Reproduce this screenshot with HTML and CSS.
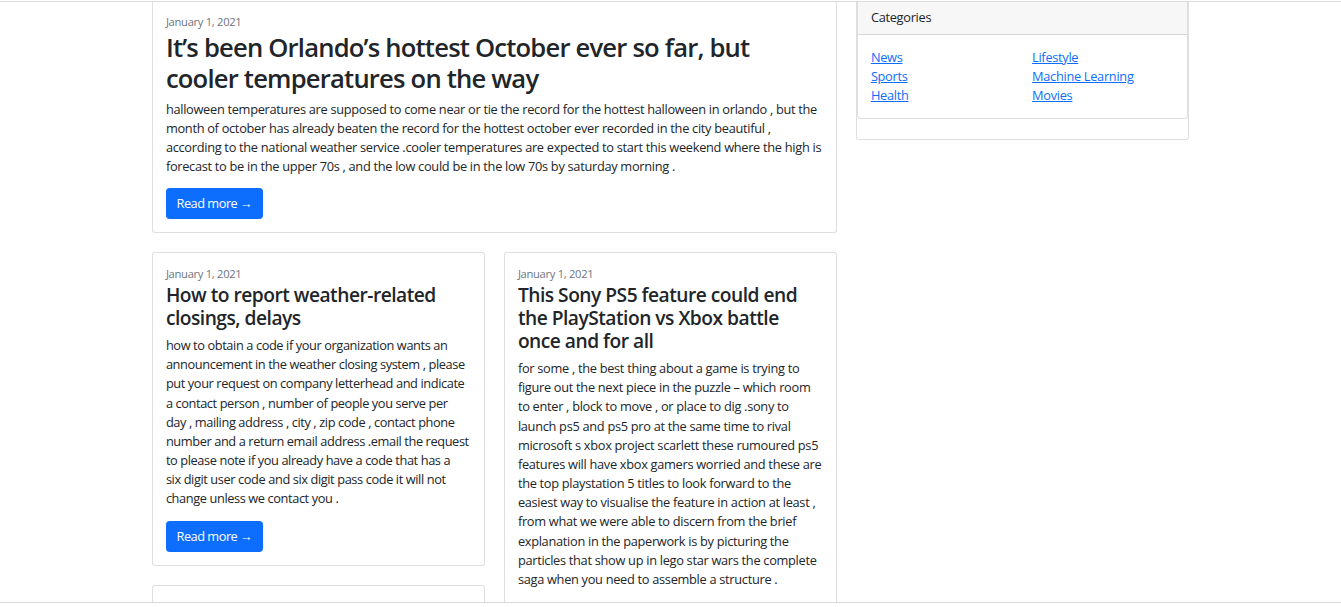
FILE: index.html
```html
<!DOCTYPE html>
<html lang="en">
<head>
<meta charset="utf-8">
<title>Blog</title>
<link rel="stylesheet" href="styles.css">
</head>
<body>
<div class="topbar"></div>
<main class="container">
  <div class="layout">
    <div class="main-col">
      <article class="card card-cut featured">
        <div class="card-body body-cut">
          <div class="date">January 1, 2021</div>
          <h2 class="title-lg">It’s been Orlando’s hottest October ever so far, but cooler temperatures on the way</h2>
          <p class="excerpt">halloween temperatures are supposed to come near or tie the record for the hottest halloween in orlando , but the month of october has already beaten the record for the hottest october ever recorded in the city beautiful , according to the national weather service .cooler temperatures are expected to start this weekend where the high is forecast to be in the upper 70s , and the low could be in the low 70s by saturday morning .</p>
          <a class="btn" href="#">Read more →</a>
        </div>
      </article>
      <div class="grid2">
        <div class="stack">
          <article class="card">
            <div class="card-body">
              <div class="date">January 1, 2021</div>
              <h4 class="title">How to report weather-related closings, delays</h4>
              <p class="excerpt tight">how to obtain a code if your organization wants an<br>
announcement in the weather closing system , please<br>
put your request on company letterhead and indicate<br>
a contact person , number of people you serve per<br>
day , mailing address , city , zip code , contact phone<br>
number and a return email address .email the request<br>
to please note if you already have a code that has a<br>
six digit user code and six digit pass code it will not<br>
change unless we contact you .</p>
              <a class="btn" href="#">Read more →</a>
            </div>
          </article>
          <article class="card">
            <div class="card-body placeholder"></div>
          </article>
        </div>
        <div class="stack">
          <article class="card">
            <div class="card-body">
              <div class="date">January 1, 2021</div>
              <h4 class="title">This Sony PS5 feature could end the PlayStation vs Xbox battle once and for all</h4>
              <p class="excerpt">for some , the best thing about a game is trying to figure out the next piece in the puzzle – which room to enter , block to move , or place to dig .sony to launch ps5 and ps5 pro at the same time to rival microsoft s xbox project scarlett these rumoured ps5 features will have xbox gamers worried and these are the top playstation 5 titles to look forward to the easiest way to visualise the feature in action at least , from what we were able to discern from the brief explanation in the paperwork is by picturing the particles that show up in lego star wars the complete saga when you need to assemble a structure .</p>
              <a class="btn" href="#">Read more →</a>
            </div>
          </article>
        </div>
      </div>
    </div>
    <aside class="side-col">
      <div class="card card-cut outer">
        <div class="card card-cut inner">
          <div class="card-header">Categories</div>
          <div class="card-body">
            <div class="cats">
              <ul>
                <li><a href="#">News</a></li>
                <li><a href="#">Sports</a></li>
                <li><a href="#">Health</a></li>
              </ul>
              <ul>
                <li><a href="#">Lifestyle</a></li>
                <li><a href="#">Machine Learning</a></li>
                <li><a href="#">Movies</a></li>
              </ul>
            </div>
          </div>
        </div>
      </div>
    </aside>
  </div>
</main>
<div class="bottombar"></div>
</body>
</html>
```
FILE: styles.css
```css
* { box-sizing: border-box; }

body {
  margin: 0;
  height: 607px;
  overflow: hidden;
  background: #fff;
  color: #212529;
  font-family: "Open Sans", "Noto Sans", sans-serif;
  font-size: 12.8px;
  line-height: 1.5;
  letter-spacing: -0.3px;
}

.topbar {
  height: 2px;
  border-bottom: 1px solid #dedede;
}

.container {
  width: 1036.8px;
  margin: 0 auto;
}

.layout {
  display: flex;
  gap: 19.2px;
  align-items: flex-start;
}

.main-col { width: 684.8px; flex: none; }
.side-col { width: 332.8px; flex: none; }

.card {
  background: #fff;
  border: 1px solid rgba(0, 0, 0, 0.125);
  border-radius: 3.2px;
}

.card-cut {
  border-top: 0;
  border-top-left-radius: 0;
  border-top-right-radius: 0;
}

.card-body { padding: 12.8px; }
.body-cut { padding-top: 12px; }
.placeholder { height: 60px; }

.featured { margin-bottom: 19.2px; }

.date {
  font-size: 11.2px;
  color: #6c757d;
}

.featured .date { margin-bottom: 2px; }

.title-lg {
  margin: 0 0 5.4px;
  font-size: 25.6px;
  line-height: 1.2;
  font-weight: 600;
  letter-spacing: -0.8px;
}

.title {
  margin: 0 0 7.4px;
  font-size: 19.2px;
  line-height: 1.2;
  font-weight: 600;
  letter-spacing: -0.5px;
}

.excerpt { margin: 0 0 12.8px; }
.featured .excerpt { margin-bottom: 11.8px; }
.tight { letter-spacing: -0.4px; }

.btn {
  display: inline-block;
  background: #0d6efd;
  color: #fff;
  border: 1px solid #0d6efd;
  border-radius: 3.2px;
  padding: 4.8px 9.6px;
  font-size: 12.8px;
  line-height: 1.5;
  letter-spacing: -0.5px;
  text-decoration: none;
}

.grid2 {
  display: grid;
  grid-template-columns: 1fr 1fr;
  gap: 19.2px;
  align-items: start;
}

.stack {
  display: flex;
  flex-direction: column;
  gap: 18.8px;
}

.inner { margin-bottom: 20px; }

.card-header {
  padding: 6.4px 12.8px;
  background: rgba(0, 0, 0, 0.03);
  border-bottom: 1px solid rgba(0, 0, 0, 0.125);
}

.cats {
  display: grid;
  grid-template-columns: 1fr 1fr;
  column-gap: 19.2px;
}

.cats ul {
  list-style: none;
  margin: 0;
  padding: 0;
}

.cats a { color: #0d6efd; text-decoration: underline; }

.bottombar {
  position: fixed;
  left: 0;
  right: 0;
  top: 602px;
  height: 5px;
  background: #fff;
  border-top: 1px solid #dadada;
}
```
